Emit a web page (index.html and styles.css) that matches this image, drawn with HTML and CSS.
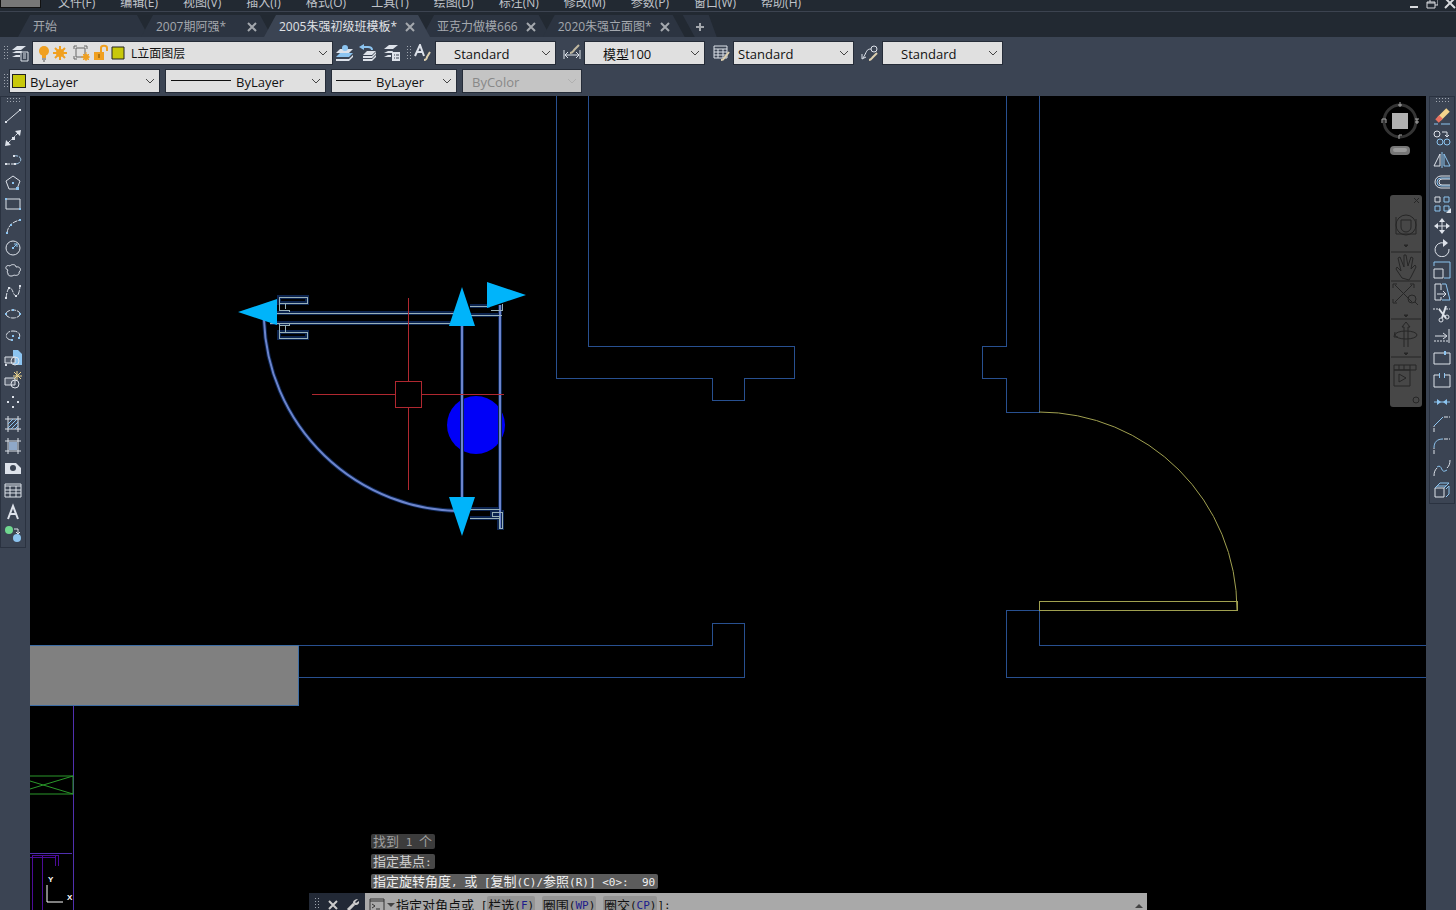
FILE: index.html
```html
<!DOCTYPE html>
<html lang="zh-CN">
<head>
<meta charset="utf-8">
<title>CAD</title>
<link rel="stylesheet" href="styles.css">
</head>
<body>
<header>
  <nav class="menubar" aria-label="菜单">
    <span class="app-logo"></span>
    <button>文件(F)</button><button>编辑(E)</button><button>视图(V)</button><button>插入(I)</button><button>格式(O)</button><button>工具(T)</button><button>绘图(D)</button><button>标注(N)</button><button>修改(M)</button><button>参数(P)</button><button>窗口(W)</button><button>帮助(H)</button>
    <span class="window-controls">
      <button aria-label="最小化"><svg width="12" height="12"><path d="M2 8h8" stroke-width="2"/></svg></button>
      <button aria-label="还原"><svg width="12" height="12"><path d="M4 3V0h8v6H9M1 3h8v6H1zM1 4h8"/></svg></button>
      <button aria-label="关闭"><svg width="12" height="12"><path d="M1 9l9-9M2 0l9 9" stroke-width="2"/></svg></button>
    </span>
  </nav>
  <div class="tabs">
    <div class="tab start"><button>开始</button></div>
    <div class="tab wide"><button>2007期阿强*</button><button class="close" aria-label="关闭"><svg width="10" height="10"><path d="M1 1l8 8M9 1l-8 8"/></svg></button></div>
    <div class="tab active"><button>2005朱强初级班模板*</button><button class="close" aria-label="关闭"><svg width="10" height="10"><path d="M1 1l8 8M9 1l-8 8"/></svg></button></div>
    <div class="tab"><button>亚克力做模666</button><button class="close" aria-label="关闭"><svg width="10" height="10"><path d="M1 1l8 8M9 1l-8 8"/></svg></button></div>
    <div class="tab"><button>2020朱强立面图*</button><button class="close" aria-label="关闭"><svg width="10" height="10"><path d="M1 1l8 8M9 1l-8 8"/></svg></button></div>
    <button class="add" aria-label="新建"><svg width="10" height="10"><path d="M5 1v8M1 5h8"/></svg></button>
  </div>
  <div class="toolbar">
    <span class="grip"></span>
    <button class="tool" aria-label="图层特性"><svg class="ic" viewBox="0 0 18 18"><path class="f" d="M6 2h9l-5 4H1zM5 7h6l-1 2H1zM5 11h4v2H1z"/><path d="M10 8h7v9h-7zM12 12h3M12 14h3M12 10h3"/></svg></button>
    <label class="combo layer">
      <svg width="90" height="18" viewBox="0 0 90 18">
        <circle cx="8" cy="7" r="5" fill="#f0a020"/><path d="M6 11h4v3H6z" fill="#f0a020"/><path d="M6 15h4M7 17h2" stroke="#555"/>
        <circle cx="24" cy="9" r="4" fill="#f0a020"/><path d="M24 2v14M17 9h14M19 4l10 10M29 4L19 14" stroke="#f0a020" stroke-width="2"/>
        <path d="M38 5V2h3M48 2h3v3M38 12v3h3M40 4h9v9h-9z" fill="none" stroke="#666"/><circle cx="50" cy="13" r="3" fill="#f0a020"/><path d="M50 8v9M45 13h9M47 10l6 6M53 10l-6 6" stroke="#f0a020"/>
        <path d="M58 8h10v8H58z" fill="#f0a020"/><path d="M65 8V4c0-3 6-3 6 0v3" fill="none" stroke="#f0a020" stroke-width="2"/><path d="M63 10v4" stroke="#754a00"/>
        <path d="M76 3h12v12H76z" fill="#c8c80a" stroke="#222"/>
      </svg>
      <select aria-label="图层"><option>L立面图层</option></select>
      <svg class="chev" viewBox="0 0 8 6"><path d="M0 1l4 4 4-4"/></svg>
    </label>
    <button class="tool" aria-label="置为当前"><svg class="ic" viewBox="0 0 18 18"><path class="b" d="M4 9h13l-4 4H0z"/><path class="f" d="M4 5h13l-4 4H0zM0 15h13l4-4v2l-4 4H0z"/><circle class="b" cx="9" cy="4" r="3"/></svg></button>
    <button class="tool" aria-label="上一个图层"><svg class="ic" viewBox="0 0 18 18"><path class="f" d="M8 7h9l-4 4H4zM4 12h9l4-4v2l-4 4H4zM4 15h9l4-4v2l-4 4H4z"/><path d="M3 3h6c3 0 4 1 4 3" stroke="#8cc4f0" stroke-width="2"/><path class="b" d="M0 3l5-3v6z"/></svg></button>
    <button class="tool" aria-label="图层状态"><svg class="ic" viewBox="0 0 18 18"><path class="f" d="M6 1h9l-5 4H1zM5 7h5l-1 2H1zM5 11h3v2H1zM9 8h8v9H9z"/><path d="M11 11h1M13 11h3M11 14h1M13 14h3" stroke="#3b4453"/></svg></button>
    <span class="grip"></span>
    <button class="tool" aria-label="文字样式"><svg class="ic" viewBox="0 0 18 18"><path d="M1 12L6 1l4 11M3 8h6" stroke-width="2"/><path d="M10 16c2 0 3-2 3-3l3-5" stroke="#ddd0b0" stroke-width="2"/></svg></button>
    <label class="combo std"><select aria-label="文字样式"><option>Standard</option></select><svg class="chev" viewBox="0 0 8 6"><path d="M0 1l4 4 4-4"/></svg></label>
    <button class="tool" aria-label="标注样式"><svg class="ic" viewBox="0 0 18 18"><path d="M1 6v9M17 6v9M2 11h14M5 8l-3 3 3 3M13 8l3 3-3 3"/><path d="M7 9c3 0 3-2 5-4l4-4" stroke="#c0b8a0" stroke-width="2"/></svg></button>
    <label class="combo std"><select aria-label="标注样式"><option>模型100</option></select><svg class="chev" viewBox="0 0 8 6"><path d="M0 1l4 4 4-4"/></svg></label>
    <button class="tool" aria-label="表格样式"><svg class="ic" viewBox="0 0 18 18"><path d="M2 2h13v12H2zM2 5h13M2 8h13M2 11h13M6 5v9M11 5v9"/><path d="M9 16c3 0 3-2 4-3l4-5" stroke="#ddd0b0" stroke-width="2"/></svg></button>
    <label class="combo table"><select aria-label="表格样式"><option>Standard</option></select><svg class="chev" viewBox="0 0 8 6"><path d="M0 1l4 4 4-4"/></svg></label>
    <button class="tool" aria-label="引线样式"><svg class="ic" viewBox="0 0 18 18"><circle cx="13" cy="5" r="3"/><path d="M10 5c-5 0-4 3-8 9M1 10v5l4-2"/><path d="M8 16c2 0 3-2 4-3l4-4" stroke="#ddd0b0" stroke-width="2"/></svg></button>
    <label class="combo std"><select aria-label="引线样式"><option>Standard</option></select><svg class="chev" viewBox="0 0 8 6"><path d="M0 1l4 4 4-4"/></svg></label>
  </div>
  <div class="toolbar props">
    <span class="grip"></span>
    <label class="combo color"><span class="swatch"></span><select aria-label="颜色"><option>ByLayer</option></select><svg class="chev" viewBox="0 0 8 6"><path d="M0 1l4 4 4-4"/></svg></label>
    <label class="combo ltype"><span class="rule"></span><select aria-label="线型"><option>ByLayer</option></select><svg class="chev" viewBox="0 0 8 6"><path d="M0 1l4 4 4-4"/></svg></label>
    <label class="combo lweight"><span class="rule short"></span><select aria-label="线宽"><option>ByLayer</option></select><svg class="chev" viewBox="0 0 8 6"><path d="M0 1l4 4 4-4"/></svg></label>
    <label class="combo pstyle"><select aria-label="打印样式" disabled><option>ByColor</option></select><svg class="chev" viewBox="0 0 8 6"><path d="M0 1l4 4 4-4"/></svg></label>
  </div>
</header>
<main>
  <aside class="side left">
    <div class="palette">
      <span class="hgrip"></span>
      <button aria-label="直线"><svg class="ic" viewBox="0 0 18 18"><path d="M2 15L16 3"/><path class="f" d="M1 14h2v2H1zM15 2h2v2h-2z"/></svg></button>
      <button aria-label="构造线"><svg class="ic" viewBox="0 0 18 18"><path d="M3 15L15 3" stroke-dasharray="5 1"/><path class="f" d="M1 17l1-6 5 5zM17 1l-6 1 5 5zM8 8h3v3H8z"/></svg></button>
      <button aria-label="多段线"><svg class="ic" viewBox="0 0 18 18"><path d="M2 13h9" stroke-dasharray="4 1"/><path d="M9 5c10-2 10 8 2 8" stroke-dasharray="5 1" stroke="#a8d0f0"/><path class="f" d="M1 12h2v2H1zM9 4h2v2H9zM10 12h2v2h-2z"/></svg></button>
      <button aria-label="多边形"><svg class="ic" viewBox="0 0 18 18"><path d="M9 3l7 5-3 8H5L2 8z"/><path class="b" d="M8 9h2v2H8zM12 14h3v3h-3z"/></svg></button>
      <button aria-label="矩形"><svg class="ic" viewBox="0 0 18 18"><path d="M2 4h14v10H2z"/><path class="b" d="M1 3h2v2H1zM15 13h2v2h-2z"/></svg></button>
      <button aria-label="圆弧"><svg class="ic" viewBox="0 0 18 18"><path d="M3 16C4 9 8 5 16 3" stroke-dasharray="5 1"/><path class="b" d="M2 15h2v2H2zM6 7h2v2H6zM15 2h2v2h-2z"/></svg></button>
      <button aria-label="圆"><svg class="ic" viewBox="0 0 18 18"><circle cx="9" cy="9" r="7"/><path d="M9 9l4-4M10 5h3v3" stroke="#8cc4f0"/><path class="b" d="M8 8h2v2H8z"/></svg></button>
      <button aria-label="修订云线"><svg class="ic" viewBox="0 0 18 18"><path d="M4 9C0 8 2 3 6 5c1-2 6-2 6 1 4-1 6 3 3 5 1 3-3 4-5 3-2 2-7 1-6-2-1 0-1-2 0-3z"/></svg></button>
      <button aria-label="样条曲线"><svg class="ic" viewBox="0 0 18 18"><path d="M2 15C4 1 7 4 9 9c2 6 6 6 7-6" stroke-dasharray="5 1"/><path class="f" d="M1 14h2v2H1zM4 4h2v2H4zM11 12h2v2h-2zM15 2h2v2h-2z"/></svg></button>
      <button aria-label="椭圆"><svg class="ic" viewBox="0 0 18 18"><ellipse cx="9" cy="9" rx="7" ry="4" stroke-dasharray="5 1"/><path class="b" d="M1 8h2v2H1zM8 4h2v2H8zM15 8h2v2h-2z"/></svg></button>
      <button aria-label="椭圆弧"><svg class="ic" viewBox="0 0 18 18"><path d="M7 13C0 12 1 4 9 4c6 0 8 4 6 7" stroke-dasharray="6 1"/><path class="b" d="M8 8h2v2H8zM7 12h2v2H7zM14 10h2v2h-2z"/></svg></button>
      <button aria-label="插入块"><svg class="ic" viewBox="0 0 18 18"><path class="b" d="M9 1h5l4 4v11H9z"/><path d="M1 8h10v6H1z" fill="#555d6b"/><circle cx="11" cy="12" r="4"/><path class="f" d="M1 15h2v2H1z"/></svg></button>
      <button aria-label="创建块"><svg class="ic" viewBox="0 0 18 18"><path d="M1 7h10v7H1z" fill="#555d6b"/><circle cx="11" cy="13" r="4"/><path d="M13 0v9M9 5h9M10 1l7 7M17 1l-7 7" stroke="#f0d890"/></svg></button>
      <button aria-label="点"><svg class="ic" viewBox="0 0 18 18"><path class="f" d="M8 3h2v2H8zM3 8h2v2H3zM13 8h2v2h-2zM8 13h2v2H8z"/></svg></button>
      <button aria-label="图案填充"><svg class="ic" viewBox="0 0 18 18"><path d="M4 1v16M14 1v16M1 4h16M1 14h16"/><path d="M4 9l5-5M4 13l9-9M7 14l7-7M11 14l3-3" stroke="#8cc4f0"/></svg></button>
      <button aria-label="渐变色"><svg class="ic" viewBox="0 0 18 18"><path d="M4 1v16M14 1v16M1 4h16M1 14h16"/><path d="M5 5h8v8H5z" fill="#8fa8c8" stroke="none"/></svg></button>
      <button aria-label="面域"><svg class="ic" viewBox="0 0 18 18"><path class="f" d="M1 4h11l5 5v6H1z"/><circle cx="9" cy="9" r="3" fill="#3b4453" stroke="none"/></svg></button>
      <button aria-label="表格"><svg class="ic" viewBox="0 0 18 18"><path d="M1 3h16v13H1zM1 5h16M1 9h16M1 12h16M6 5v11M12 5v11"/></svg></button>
      <button aria-label="多行文字"><svg class="ic" viewBox="0 0 18 18"><path d="M4 16L9 3l5 13M6 11h6" stroke-width="2"/></svg></button>
      <button aria-label="添加选定对象"><svg class="ic" viewBox="0 0 18 18"><circle cx="5" cy="5" r="4" fill="#70d890" stroke="none"/><circle cx="13" cy="13" r="4" fill="#8cc4f0" stroke="none"/><path d="M10 4h4v5M12 7l2 2 2-2"/></svg></button>
    </div>
  </aside>
  <section class="canvas">
    <svg class="drawing" aria-label="图纸">
      <g transform="translate(-30 -96)" fill="none">
        <g class="wall">
          <path d="M556 90V378H712V400H744V378H794V346H588V90"/>
          <path d="M1006 90V346H982V378H1006V412H1039V90"/>
          <path d="M299 645H712V623H744V677H299"/>
          <path d="M5000 645H1039V610H1006V677H5000"/>
        </g>
        <path class="slab" d="M20 645H298V705H20z"/>
        <path d="M73 706V5000M20 853H72" stroke="#5030b0" shape-rendering="crispEdges"/>
        <path d="M32 910V855H58V866M42 856V5000M55 866V856M20 857H55" stroke="#4c0c98" shape-rendering="crispEdges"/>
        <path d="M20 776H73V794H20M30 789L73 776M30 781L73 794" stroke="#2a982a"/>
        <g stroke="#a0a050"><path d="M1039 601H1237V610H1039z" shape-rendering="crispEdges"/><path d="M1039 412A198 198 0 0 1 1237 610"/></g>
        <circle cx="476" cy="425" r="29" fill="#0000f8"/>
        <path class="halo" d="M264 320A198 198 0 0 0 462 511M462 322V500M500 305V528M270 313H455M270 323H455M470 306H490M470 315H502M470 509H500M470 518H500M279 297H307V303H279zM279 332H307V338H279zM492 512H502V528H499V516H492z"/>
        <path class="selected" d="M264 320A198 198 0 0 0 462 511M462 322V500M500 305V528"/>
        <path class="frame" d="M270 313H455M270 323H455M470 306H490M470 315H502M470 509H500M470 518H500M279 297H307V303H279zM279 332H307V338H279zM279 303V311M285 303V309M289 312V310H280M279 323V332M285 325V332M280 325H289V323M492 512H502V528H499V516H492zM491 310H502V304"/>
        <g fill="#00b4fa"><path d="M238 312L277 299V325zM462 287L475 326H449zM462 536L449 497H475zM526 295L487 282V308z"/></g>
        <path d="M408 298V381M408 408V490M312 394H395M422 394H504M395 381H421V407H395z" stroke="#b02830" shape-rendering="crispEdges"/>
      </g>
    </svg>
    <svg class="ucs" width="34" height="34" viewBox="0 0 34 34"><path d="M5 11V28H21" fill="none" stroke="#fff"/><text x="6" y="8">Y</text><text x="25" y="26">X</text></svg>
    <svg class="cube" width="44" height="60" viewBox="0 0 44 60" fill="none"><circle cx="20" cy="20" r="16" stroke="#343434" stroke-width="3"/><path d="M12 12h16v16H12z" fill="#b0b0b0"/><path d="M20 1v5M18 4h4M2 22v-4h4v4M35 18h4M37 18v5M35 21h4M19 38v-4h3" stroke="#aaa"/><rect x="10" y="45" width="20" height="9" rx="4" fill="#777"/><rect x="13" y="47" width="14" height="4" rx="2" fill="#999"/></svg>
    <div class="navbar">
      <svg width="32" height="212" viewBox="0 0 32 212" fill="none" stroke="#262626"><path d="M24 3l5 5M29 3l-5 5M1 57h30M1 86h30M1 124h30M1 162h30"/><circle cx="16" cy="30" r="10"/><path d="M11 25h10v7a5 5 0 0 1-10 0zM6 22v17h20V24"/><path d="M14 50h4l-2 2zM14 120h4l-2 2zM14 158h4l-2 2z" fill="#262626"/><path d="M12 83l-6-9 1-2 4 4-3-13 2-1 4 10V60h2l2 11 3-9 2 1-2 11 4-4 1 2-5 10-2 3z"/><path d="M5 90l17 17M5 107L22 90M3 93v-4h4M20 89h4v4M3 104v4h4"/><circle cx="22" cy="104" r="4"/><path d="M25 107l3 3"/><ellipse cx="16" cy="140" rx="11" ry="4"/><path d="M14 152v-20h-2l4-5 4 5h-2v20M5 137l-1 5h4"/><path d="M4 170h22v5H4zM4 175h16v16H4zM9 170v5M14 170v5M20 170v5M9 179l7 4-7 4z"/><circle cx="26" cy="205" r="3"/></svg>
    </div>
    <div class="command">
      <div class="history">
        <p class="old"><span>找到</span> 1 <span>个</span></p>
        <p class="mid"><span>指定基点</span>:</p>
        <p><span>指定旋转角度</span>, <span>或</span> [<span>复制</span>(C)/<span>参照</span>(R)] &lt;0&gt;:&nbsp; 90</p>
      </div>
      <div class="cmdbar">
        <div class="cmdtools">
          <span class="grip"></span>
          <button aria-label="关闭"><svg width="12" height="12"><path d="M2 2l8 8M10 2l-8 8"/></svg></button>
          <button aria-label="自定义"><svg width="14" height="14"><path d="M2 12l6-6" stroke-width="3"/><path d="M12 1L9 4l1 1 3-2c1 5-5 5-6 2 0-3 3-4 5-4z" fill="#ccc" stroke="none"/></svg></button>
        </div>
        <label class="prompt" for="cmd">
          <svg width="26" height="14" viewBox="0 0 26 14" fill="none" stroke="#333"><path d="M1 1h14v12H1zM1 3h14M3 6l3 2-3 2M7 11h4"/><path d="M18 5h8l-4 4z" fill="#444" stroke="none"/></svg>
          <span class="cjk">指定对角点或</span>&nbsp;[<button><span>栏选</span>(<b>F</b>)</button>&nbsp;<button><span>圈围</span>(<b>WP</b>)</button>&nbsp;<button><span>圈交</span>(<b>CP</b>)</button>]:
        </label>
        <input id="cmd" type="text">
        <button class="more" aria-label="历史"><svg width="8" height="5"><path d="M0 5l4-4 4 4z"/></svg></button>
      </div>
    </div>
  </section>
  <aside class="side right">
    <div class="palette">
      <span class="hgrip"></span>
      <button aria-label="删除"><svg class="ic" viewBox="0 0 18 18"><path d="M6 12L15 3" stroke="#f4d48c" stroke-width="5"/><path d="M4 14l4-4" stroke="#e87060" stroke-width="5"/><path d="M1 17h4M8 17h9" stroke="#8cc4f0"/></svg></button>
      <button aria-label="复制"><svg class="ic" viewBox="0 0 18 18"><circle cx="4" cy="5" r="3"/><path d="M9 3h5v5M12 6l2 2 2-2"/><g stroke="#8cc4f0"><circle cx="7" cy="13" r="3"/><circle cx="14" cy="13" r="3"/></g></svg></button>
      <button aria-label="镜像"><svg class="ic" viewBox="0 0 18 18"><path d="M7 3v12H1z"/><path d="M11 3v12h6z" stroke="#8cc4f0"/><path d="M9 1v16" stroke="#8cc4f0"/></svg></button>
      <button aria-label="偏移"><svg class="ic" viewBox="0 0 18 18"><path d="M17 3H8a6 6 0 0 0 0 12h9M17 12H9a3 3 0 0 1 0-6h8"/><path d="M17 5H8a4 4 0 0 0 0 8h9" stroke="#8cc4f0"/></svg></button>
      <button aria-label="阵列"><svg class="ic" viewBox="0 0 18 18"><path d="M2 2h5v5H2z"/><path d="M11 2h5v5h-5zM2 11h5v5H2zM11 11h5v5h-5z" stroke="#8cc4f0"/><path class="f" d="M18 13v5h-5z"/></svg></button>
      <button aria-label="移动"><svg class="ic" viewBox="0 0 18 18"><path d="M9 3v12M3 9h12"/><path class="f" d="M9 1l3 4H6zM9 17l-3-4h6zM1 9l4-3v6zM17 9l-4 3V6z"/></svg></button>
      <button aria-label="旋转"><svg class="ic" viewBox="0 0 18 18"><path d="M11 4a7 7 0 1 0 5 6"/><path class="f" d="M10 0l5 4-5 4z"/></svg></button>
      <button aria-label="缩放"><svg class="ic" viewBox="0 0 18 18"><path d="M1 5V1h16v16h-6" stroke="#8cc4f0"/><path d="M1 8h9v9H1z"/></svg></button>
      <button aria-label="拉伸"><svg class="ic" viewBox="0 0 18 18"><path d="M8 7V1H2v16h6v-3M4 11h8M10 8l3 3-3 3"/><path d="M9 1h4l4 16H9" stroke="#8cc4f0"/></svg></button>
      <button aria-label="修剪"><svg class="ic" viewBox="0 0 18 18"><path d="M0 4h7M13 4h4" stroke-dasharray="2 1"/><path d="M6 4l7 9M13 1L9 13" stroke-width="2"/><circle cx="8" cy="15" r="2"/><circle cx="14" cy="12" r="2"/></svg></button>
      <button aria-label="延伸"><svg class="ic" viewBox="0 0 18 18"><path d="M16 2v14M2 9h11M10 6l4 3-4 3"/><path d="M1 14h14" stroke-dasharray="2 1"/></svg></button>
      <button aria-label="打断于点"><svg class="ic" viewBox="0 0 18 18"><path d="M11 4H1v11h16V4h-4"/><path class="b" d="M11 2h2v4h-2z"/></svg></button>
      <button aria-label="打断"><svg class="ic" viewBox="0 0 18 18"><path d="M6 4H1v12h16V4h-5"/><path class="b" d="M6 2h1v5H6zM11 2h1v5h-1z"/></svg></button>
      <button aria-label="合并"><svg class="ic" viewBox="0 0 18 18"><path d="M1 9h16" stroke="#8cc4f0"/><path class="b" d="M4 6l4 3-4 3zM14 6l-4 3 4 3z"/></svg></button>
      <button aria-label="倒角"><svg class="ic" viewBox="0 0 18 18"><path d="M1 17v-6M11 2h6" stroke-dasharray="4 1"/><path d="M1 11l9-9" stroke="#8cc4f0"/></svg></button>
      <button aria-label="圆角"><svg class="ic" viewBox="0 0 18 18"><path d="M1 17v-6M11 2h6" stroke-dasharray="4 1"/><path d="M1 11c0-6 3-9 9-9" stroke="#8cc4f0"/></svg></button>
      <button aria-label="光顺曲线"><svg class="ic" viewBox="0 0 18 18"><path d="M1 17c0-4 1-6 3-8M14 9c2-2 3-4 3-8"/><path d="M4 8c6-4 3 8 10 3" stroke="#8cc4f0"/></svg></button>
      <button aria-label="分解"><svg class="ic" viewBox="0 0 18 18"><path d="M2 7h9v9H2z"/><path d="M4 5l3-3h9l-3 3zM13 8l3-3v8l-3 3M2 7l3-3M11 7l3-3" stroke="#8cc4f0"/></svg></button>
    </div>
  </aside>
</main>
</body>
</html>
```

FILE: styles.css
```css
* { box-sizing: border-box; }

body {
  margin: 0;
  height: 100vh;
  display: flex;
  flex-direction: column;
  overflow: hidden;
  background: #3b4453;
  color: #c0c4ca;
  font: 12px/18px "Open Sans", "Noto Sans CJK SC", sans-serif;
}

button {
  border: 0;
  padding: 0;
  background: none;
  color: inherit;
  font: inherit;
  display: flex;
  align-items: center;
  justify-content: center;
  white-space: nowrap;
}

svg { display: block; flex: none; }

/* Menu bar */
.menubar {
  height: 12px;
  display: flex;
  align-items: flex-end;
  gap: 25px;
  overflow: hidden;
  background: #222932;
  border-bottom: 1px solid #3c4350;
  line-height: 16px;
}
.app-logo {
  width: 41px;
  height: 8px;
  margin-right: -8px;
  align-self: flex-start;
  background: #777;
  border: 1px solid #111;
  border-top: 0;
}
.window-controls { margin-left: auto; display: flex; gap: 6px; }
.window-controls svg { fill: none; stroke: #d8dade; }

/* Drawing tabs */
.tabs {
  height: 25px;
  padding: 3px 0 0 18px;
  display: flex;
  background: #222932;
}
.tab {
  display: flex;
  align-items: center;
  justify-content: space-between;
  gap: 8px;
  padding: 2px 15px 0;
  margin-right: -8px;
  background: #2c3441;
  color: #a4a8ae;
  clip-path: polygon(12px 0, calc(100% - 12px) 0, 100% 100%, 0 100%);
}
.tab.start { width: 131px; }
.tab.wide { width: 131px; }
.tab.active { background: #3b4453; color: #e0e2e6; z-index: 1; }
.tab svg, .add svg { fill: none; stroke: #a4a8ae; stroke-width: 2; }
.add {
  width: 34px;
  margin-left: 6px;
  padding-top: 2px;
  background: #2c3441;
  clip-path: polygon(0 0, 26px 0, 100% 100%, 12px 100%);
}

/* Toolbars */
.toolbar {
  height: 32px;
  padding: 4px 4px 4px 3px;
  display: flex;
  align-items: center;
  font-size: 13px;
}
.toolbar.props { height: 27px; padding: 0 4px 4px 3px; gap: 5px; }
.props .grip { margin-right: -4px; }
.grip {
  flex: none;
  width: 5px;
  height: 16px;
  background: radial-gradient(circle, #a0a6b0 1px, transparent 1px) 0 0 / 3px 3px;
}
.tool { width: 23px; height: 24px; margin: 0 1px 0 0; }
.combo + .tool { margin: 0 1px 0 4px; }
.layer + .tool { margin: 0; }
.tool + .grip { margin: 0 0 0 2px; }
.ic { width: 18px; height: 18px; fill: none; stroke: #dde2ea; }
.ic .f { fill: #dde2ea; stroke: none; }
.ic .b { fill: #8cc4f0; stroke: none; }
.combo {
  height: 24px;
  display: flex;
  align-items: center;
  padding: 0 5px 0 2px;
  background: #e0e0e0;
  border: 1px solid #252c38;
  color: #111;
}
.combo select {
  appearance: none;
  flex: 1;
  min-width: 0;
  height: 22px;
  padding: 2px 0 0;
  border: 0;
  background: none;
  color: inherit;
  font: inherit;
}
.chev { width: 8px; height: 6px; fill: none; stroke: #444; }
.layer { width: 301px; padding-left: 3px; font-size: 12px; }
.layer select { padding-left: 5px; }
.std { width: 121px; padding-left: 18px; }
.table { width: 121px; padding-left: 4px; }
.color { width: 151px; gap: 4px; }
.ltype { width: 161px; padding-left: 5px; gap: 5px; }
.lweight { width: 126px; padding-left: 4px; gap: 5px; }
.pstyle { width: 120px; padding-left: 9px; background: #c4c4c4; color: #888; }
.pstyle select { opacity: 1; }
.pstyle .chev { stroke: #b0b0b0; }
.swatch { width: 14px; height: 14px; background: #c8c80a; border: 1px solid #222; }
.rule { width: 60px; height: 1px; background: #111; }
.rule.short { width: 35px; }

/* Workspace */
main { flex: 1; min-height: 0; display: flex; }
.side { width: 30px; flex: none; background: #3b4453; }
.side.right { padding-left: 3px; }
.palette {
  width: 26px;
  padding-bottom: 2px;
  display: flex;
  flex-direction: column;
  align-items: center;
  border: 1px solid #2a3240;
}
.palette button { width: 22px; height: 22px; }
.hgrip {
  width: 14px;
  height: 6px;
  margin-bottom: 2px;
  background: radial-gradient(circle, #a0a6b0 1px, transparent 1px) 0 0 / 3px 3px;
}

.canvas { flex: 1; min-width: 0; position: relative; overflow: hidden; background: #000; }
.drawing { width: 100%; height: 100%; }
.wall { stroke: #285090; shape-rendering: crispEdges; }
.slab { fill: #808080; stroke: #3c6ca4; shape-rendering: crispEdges; }
.halo { stroke: #0c2450; stroke-width: 4; }
.selected { stroke: #6c84cc; stroke-width: 2; }
.frame { stroke: #98b0b8; shape-rendering: crispEdges; }
.ucs { position: absolute; left: 12px; bottom: 2px; }
.ucs text { fill: #fff; font: bold 8px "Liberation Sans", sans-serif; }
.cube { position: absolute; top: 5px; right: 2px; }
.navbar {
  position: absolute;
  top: 99px;
  right: 4px;
  background: #474747;
  border-radius: 3px;
}

/* Command line */
.command {
  position: absolute;
  left: 279px;
  right: 279px;
  bottom: -7px;
  font: 11px/15px "DejaVu Sans Mono", "Noto Sans CJK SC", monospace;
}
.history {
  margin: 0 0 4px 62px;
  display: flex;
  flex-direction: column;
  align-items: flex-start;
  gap: 5px;
}
.history p {
  height: 15px;
  margin: 0;
  padding: 0 3px 0 2px;
  border-radius: 2px;
  background: #5c5c5c;
  color: #f0f0f0;
  white-space: nowrap;
}
.history .mid { background: #484848; color: #d0d0d0; }
.history .old { background: #3c3c3c; color: #a0a0a0; }
.history span, .prompt span { font-size: 13px; }
.cmdbar { height: 24px; display: flex; background: #a9a9a9; color: #111; }
.cmdtools {
  width: 56px;
  padding: 0 5px;
  display: flex;
  align-items: center;
  justify-content: space-between;
  background: #222936;
}
.cmdtools svg { fill: none; stroke: #ccc; stroke-width: 2; }
.prompt { display: flex; align-items: center; padding: 0 0 0 4px; white-space: nowrap; }
.prompt .cjk { margin-left: 1px; }
.prompt button { height: 18px; padding: 0 1px; background: #949494; border-radius: 2px; }
.prompt b { font-weight: normal; color: #1c1c8c; }
.cmdbar input { flex: 1; min-width: 0; border: 0; padding: 0; background: none; font: inherit; outline: 0; }
.more { width: 16px; }
.more svg { fill: #444; }
```
